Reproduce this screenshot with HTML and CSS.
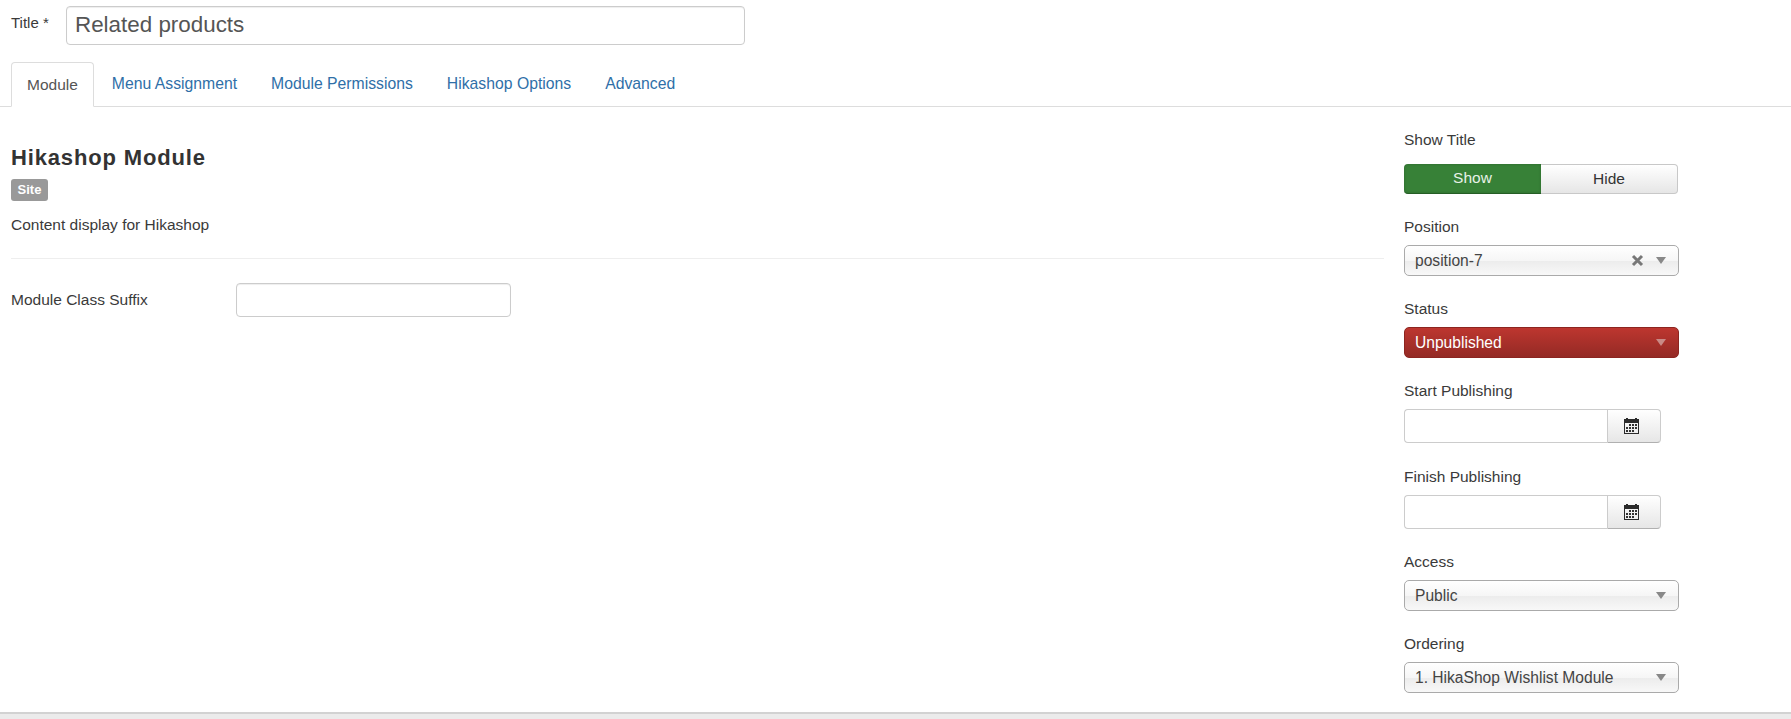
FILE: index.html
```html
<!DOCTYPE html>
<html lang="en">
<head>
<meta charset="utf-8">
<title>Related products</title>
<link rel="stylesheet" href="styles.css">
</head>
<body>
<div class="page">
  <div class="title-row">
    <label class="title-label">Title *</label>
    <input class="title-input" type="text" value="Related products">
  </div>
  <ul class="tabs">
    <li class="tab active">Module</li>
    <li class="tab">Menu Assignment</li>
    <li class="tab">Module Permissions</li>
    <li class="tab">Hikashop Options</li>
    <li class="tab">Advanced</li>
  </ul>
  <div class="columns">
    <main class="main">
      <h3 class="heading">Hikashop Module</h3>
      <span class="badge">Site</span>
      <p class="desc">Content display for Hikashop</p>
      <hr class="rule">
      <div class="control-row">
        <label class="control-label">Module Class Suffix</label>
        <input class="text-input" type="text">
      </div>
    </main>
    <aside class="side">
      <div class="field field-title">
        <label class="field-label">Show Title</label>
        <div class="toggle"><span class="toggle-btn on">Show</span><span class="toggle-btn off">Hide</span></div>
      </div>
      <div class="field">
        <label class="field-label">Position</label>
        <div class="select"><span class="select-text">position-7</span>
          <svg class="clear" width="13" height="13" viewBox="0 0 13 13"><path d="M2 2 11 11M11 2 2 11" stroke="#777" stroke-width="3" fill="none"/></svg>
          <svg class="arrow" width="10" height="7" viewBox="0 0 10 7"><path d="M0 0H10L5 7Z" fill="#888"/></svg>
        </div>
      </div>
      <div class="field">
        <label class="field-label">Status</label>
        <div class="select danger"><span class="select-text">Unpublished</span>
          <svg class="arrow" width="10" height="7" viewBox="0 0 10 7"><path d="M0 0H10L5 7Z" fill="#c98a86"/></svg>
        </div>
      </div>
      <div class="field field-start">
        <label class="field-label">Start Publishing</label>
        <div class="date"><input class="date-input" type="text"><span class="date-btn">
          <svg width="15" height="16" viewBox="0 0 15 16"><path d="M0 1H15V16H0ZM1 5V15H14V5Z" fill="#2b2b2b"/><path d="M2 0H4V2H2ZM11 0H13V2H11Z" fill="#2b2b2b"/><path d="M5 6H7V8H5ZM8 6H10V8H8ZM11 6H13V8H11ZM2 9H4V11H2ZM5 9H7V11H5ZM8 9H10V11H8ZM11 9H13V11H11ZM2 12H4V14H2ZM5 12H7V14H5ZM8 12H10V14H8Z" fill="#333"/></svg>
        </span></div>
      </div>
      <div class="field">
        <label class="field-label">Finish Publishing</label>
        <div class="date"><input class="date-input" type="text"><span class="date-btn">
          <svg width="15" height="16" viewBox="0 0 15 16"><path d="M0 1H15V16H0ZM1 5V15H14V5Z" fill="#2b2b2b"/><path d="M2 0H4V2H2ZM11 0H13V2H11Z" fill="#2b2b2b"/><path d="M5 6H7V8H5ZM8 6H10V8H8ZM11 6H13V8H11ZM2 9H4V11H2ZM5 9H7V11H5ZM8 9H10V11H8ZM11 9H13V11H11ZM2 12H4V14H2ZM5 12H7V14H5ZM8 12H10V14H8Z" fill="#333"/></svg>
        </span></div>
      </div>
      <div class="field">
        <label class="field-label">Access</label>
        <div class="select"><span class="select-text">Public</span>
          <svg class="arrow" width="10" height="7" viewBox="0 0 10 7"><path d="M0 0H10L5 7Z" fill="#888"/></svg>
        </div>
      </div>
      <div class="field">
        <label class="field-label">Ordering</label>
        <div class="select"><span class="select-text">1. HikaShop Wishlist Module</span>
          <svg class="arrow" width="10" height="7" viewBox="0 0 10 7"><path d="M0 0H10L5 7Z" fill="#888"/></svg>
        </div>
      </div>
    </aside>
  </div>
</div>
<footer class="foot"></footer>
</body>
</html>
```
FILE: styles.css
```css
* { box-sizing: border-box; }
html, body { margin: 0; height: 719px; overflow: hidden; }
body { background: #fff; font-family: "Liberation Sans", Arial, sans-serif; font-size: 15px; color: #3a3a3a; display: flex; flex-direction: column; }
.page { flex: 1; min-height: 0; padding-top: 6px; }
.title-row { display: flex; align-items: center; padding-left: 11px; height: 39px; }
.title-label { width: 55px; font-size: 15px; margin-top: -6px; }
.title-input { width: 679px; height: 39px; padding: 0 8px 2px; border: 1px solid #ccc; border-radius: 4px; font: 22.4px "Liberation Sans", Arial, sans-serif; color: #555; box-shadow: inset 0 1px 1px rgba(0,0,0,.07); }
.tabs { list-style: none; margin: 17px 0 0; padding: 0 0 0 11px; height: 45px; display: flex; border-bottom: 1px solid #ddd; }
.tab { padding: 0 17px; line-height: 44px; height: 45px; color: #2f6fa8; font-size: 15.75px; }
.tab.active { color: #555; background: #fff; border: 1px solid #ddd; border-bottom-color: #fff; border-radius: 4px 4px 0 0; padding: 0 15px; margin-right: 1px; font-size: 15.5px; }
.columns { display: flex; padding-left: 11px; }
.main { width: 1373px; padding-top: 38px; }
.heading { margin: 0; font-size: 22px; line-height: 26px; font-weight: bold; letter-spacing: .85px; color: #333; }
.badge { display: block; width: 37px; height: 22px; margin-top: 8px; background: #999; color: #fff; border-radius: 3px; font-size: 13px; font-weight: bold; line-height: 22px; text-align: center; }
.desc { margin: 14px 0 0; font-size: 15.5px; line-height: 20px; }
.rule { margin: 23px 0 0; border: 0; border-top: 1px solid #eee; }
.control-row { display: flex; align-items: center; margin-top: 24px; }
.control-label { width: 225px; font-size: 15.5px; }
.text-input { width: 275px; height: 34px; border: 1px solid #ccc; border-radius: 4px; box-shadow: inset 0 1px 1px rgba(0,0,0,.07); }
.side { width: 280px; margin-left: 20px; padding-top: 23px; }
.field { margin-bottom: 23px; }
.field-label { display: block; height: 20px; line-height: 20px; font-size: 15.5px; margin-bottom: 8px; }
.field-title { margin-bottom: 23px; }
.field-title .field-label { margin-bottom: 14px; }
.field-start { margin-bottom: 24px; }
.toggle { display: flex; width: 274px; height: 30px; }
.toggle-btn { width: 50%; text-align: center; line-height: 27px; font-size: 15.5px; }
.toggle-btn.on { background: #378137; color: #e8f2e8; border-radius: 4px 0 0 4px; border-bottom: 1px solid #255e25; box-shadow: inset 0 0 3px rgba(0,0,0,.2); }
.toggle-btn.off { background: linear-gradient(#fff, #e6e6e6); border: 1px solid #c8c8c8; border-left: 0; border-radius: 0 4px 4px 0; color: #333; }
.select { display: flex; align-items: center; width: 275px; height: 31px; padding: 0 10px; border: 1px solid #aaa; border-radius: 5px; background: linear-gradient(#fff 0%, #f6f6f6 50%, #ececec 52%, #f8f8f8 100%); color: #444; font-size: 15.6px; }
.select-text { flex: 1; }
.clear { margin-right: 12px; }
.arrow { flex: none; margin-right: 2px; }
.select.danger { background: linear-gradient(#bd362f, #942a25); border-color: #8c2520; color: #fff; }
.date { display: flex; width: 257px; height: 34px; }
.date-input { width: 203px; height: 34px; border: 1px solid #ccc; border-right: 0; border-radius: 4px 0 0 4px; }
.date-btn { flex: 1; display: flex; align-items: center; justify-content: center; padding-right: 6px; padding-bottom: 1px; border: 1px solid #ccc; border-bottom-color: #b0b0b0; border-radius: 0 4px 4px 0; background: linear-gradient(#fff, #e6e6e6); }
.foot { flex: none; height: 7px; background: #ebebeb; border-top: 2px solid #d2d2d2; }
```
